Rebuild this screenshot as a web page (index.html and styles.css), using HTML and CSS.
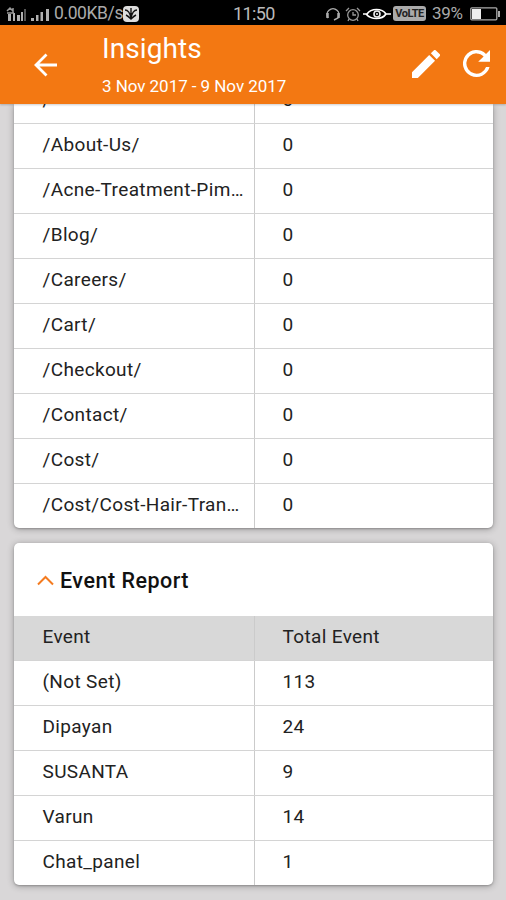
FILE: index.html
```html
<!DOCTYPE html>
<html lang="en">
<head>
<meta charset="utf-8">
<title>Insights</title>
<link rel="stylesheet" href="styles.css">
</head>
<body>
<div class="status">
  <div class="status-left">
    <svg width="44" height="18" viewBox="0 0 44 18"><g fill="#b0b0b0"><path d="M2 9h3v7H2zM7 8h2v8H7zM11 10h3v6h-3zM15 7h2v9h-2z"/><path d="M18 4h2v12h-2z" fill="#555"/><path d="M25 13h3v3h-3zM30 10h2.500v6H30zM34.500 7H37v9h-2.500zM40 4h3v12h-3z"/></g><path d="M1 6l3-3 3 3M7 3v5M1 8h7" stroke="#999" stroke-width="1.500" fill="none"/></svg>
    <span class="speed">0.00KB/s</span>
    <svg class="app" width="16" height="16" viewBox="0 0 16 16"><rect width="16" height="16" rx="4" fill="#ddd"/><path d="M2 4c3 0 5 3 6 8 1-5 3-8 6-8M8 2v10M3 9c2 1 3 2 5 4 2-2 3-3 5-4" stroke="#111" stroke-width="1.4" fill="none"/></svg>
  </div>
  <span class="clock">11:50</span>
  <div class="status-right">
    <svg width="16" height="16" viewBox="0 0 16 16" fill="none" stroke="#aaa"><path d="M3 12A6 6 0 1 1 13 12L9 14" stroke-width="1.4"/><path d="M2.500 7v5M13.500 7v5" stroke-width="2.500"/></svg>
    <svg class="alarm" width="16" height="16" viewBox="0 0 16 16" fill="none" stroke="#999" stroke-width="1.3"><circle cx="8" cy="9" r="5.3"/><path d="M8 6v3h3M1 5l3-3M15 5l-3-3M4 13l-1 2M12 13l1 2"/></svg>
    <svg class="eye" width="28" height="14" viewBox="0 0 28 14"><path d="M0 7h4C8 1 19 1 23 7h5M3 7c5 6 16 6 20 0" fill="none" stroke="#fff" stroke-width="1.7"/><circle cx="14" cy="7" r="3" fill="none" stroke="#eee" stroke-width="1.6"/><circle cx="14" cy="7" r="1" fill="#eee"/></svg>
    <span class="volte">VoLTE</span>
    <span class="percent">39%</span>
    <svg class="battery" width="31" height="14" viewBox="0 0 31 14"><rect x=".8" y=".8" width="26" height="12" rx="1" fill="none" stroke="#aaa" stroke-width="1.3"/><path d="M2 2h9v10H2z" fill="#eee"/><path d="M28 4h2v6h-2z" fill="#aaa"/></svg>
  </div>
</div>
<header class="bar">
  <svg class="back" width="24" height="24" viewBox="0 0 24 24"><path d="M23 12H2M12.5 1.5L2 12l10.500 10.500" fill="none" stroke="#fff" stroke-width="2.8"/></svg>
  <div class="titles"><h1>Insights</h1><p>3 Nov 2017 - 9 Nov 2017</p></div>
  <svg class="pencil" width="28" height="28" viewBox="3 3 18 18"><path fill="#fff" d="M3 17.250V21h3.750L17.810 9.940l-3.750-3.750L3 17.250zM20.710 7.040a1 1 0 0 0 0-1.410l-2.340-2.340a1 1 0 0 0-1.410 0l-1.830 1.830 3.750 3.750 1.830-1.830z"/></svg>
  <svg class="refresh" width="27" height="27" viewBox="4 4 16 16"><path fill="#fff" d="M17.650 6.350A8 8 0 1 0 19.730 14h-2.080A6 6 0 1 1 12 6c1.660 0 3.140.69 4.220 1.780L13 11h7V4l-2.350 2.350z"/></svg>
</header>
<main>
  <section class="card pages">
    <div class="row"><span>/</span><span>0</span></div>
    <div class="row"><span>/About-Us/</span><span>0</span></div>
    <div class="row"><span>/Acne-Treatment-Pim…</span><span>0</span></div>
    <div class="row"><span>/Blog/</span><span>0</span></div>
    <div class="row"><span>/Careers/</span><span>0</span></div>
    <div class="row"><span>/Cart/</span><span>0</span></div>
    <div class="row"><span>/Checkout/</span><span>0</span></div>
    <div class="row"><span>/Contact/</span><span>0</span></div>
    <div class="row"><span>/Cost/</span><span>0</span></div>
    <div class="row"><span>/Cost/Cost-Hair-Tran…</span><span>0</span></div>
  </section>
  <section class="card events">
    <h2><svg width="17" height="11" viewBox="0 0 17 11"><path d="M1 9.500L8.500 2 16 9.500" fill="none" stroke="#f47b20" stroke-width="2"/></svg>Event Report</h2>
    <div class="row head"><span>Event</span><span>Total Event</span></div>
    <div class="row"><span>(Not Set)</span><span>113</span></div>
    <div class="row"><span>Dipayan</span><span>24</span></div>
    <div class="row"><span>SUSANTA</span><span>9</span></div>
    <div class="row"><span>Varun</span><span>14</span></div>
    <div class="row"><span>Chat_panel</span><span>1</span></div>
  </section>
</main>
</body>
</html>
```
FILE: styles.css
```css
* { box-sizing: border-box; }
body { margin: 0; width: 506px; height: 900px; overflow: hidden; background: #d9d7d8; font-family: Roboto, sans-serif; color: #222; display: flex; flex-direction: column; }
svg { display: block; flex: none; }
.status { height: 25px; background: #000; color: #aaa; display: grid; grid-template-columns: 233px 92px 181px; align-items: center; font-size: 18px; line-height: 25px; flex: none; padding-top: 1px; }
.status-left, .status-right { display: flex; align-items: center; height: 24px; }
.status-left { padding-left: 6px; }
.speed { margin-left: 4px; width: 69px; font-size: 17.500px; letter-spacing: -.4px; white-space: nowrap; }
.clock { letter-spacing: -.6px; color: #bbb; }
.alarm { margin-left: 4px; }
.eye { margin-left: 2px; }
.volte { margin-left: 2px; width: 33px; height: 15px; border-radius: 3px; background: #aaa; color: #222; font-size: 11px; line-height: 15px; font-weight: 700; text-align: center; letter-spacing: -.5px; }
.percent { margin-left: 6px; width: 38px; font-size: 17px; letter-spacing: -.3px; }
.bar { height: 79px; flex: none; background: #f37812; color: #fff; display: flex; align-items: flex-start; position: relative; z-index: 1; box-shadow: 0 1px 2px rgba(0,0,0,.2); }
.back { margin: 28px 0 0 34px; }
.titles { margin: 7px 0 0 44px; width: 310px; }
h1 { margin: 0; font-size: 28px; line-height: 34px; font-weight: 400; letter-spacing: .1px; }
p { margin: 9px 0 0; font-size: 17px; line-height: 22px; letter-spacing: -.05px; }
.pencil { margin-top: 25px; }
.refresh { margin: 25px 0 0 23px; }
main { display: flex; flex-direction: column; gap: 15px; padding: 0 13px 0 14px; }
.card { background: #fff; border-radius: 5px; box-shadow: 0 1px 7px rgba(0,0,0,.3), 0 1px 2px rgba(0,0,0,.2); overflow: hidden; }
.pages { height: 424px; display: flex; flex-direction: column; justify-content: flex-end; border-radius: 0 0 5px 5px; }
.row { height: 45px; flex: none; display: grid; grid-template-columns: 241px 1fr; font-size: 19px; line-height: 42px; letter-spacing: .35px; border-bottom: 1.500px solid #d4d4d4; }
.row:last-child { border-bottom: 0; }
.pages .row:last-child { height: 44px; }
.row span { padding-left: 27.500px; white-space: nowrap; }
.row span:first-child { padding-left: 28.500px; border-right: 1px solid #cbcbcb; }
.events { height: 342px; }
h2 { margin: 0; height: 73px; padding: 2px 0 0 23px; display: flex; align-items: center; gap: 6px; font-size: 21.500px; line-height: 30px; font-weight: 500; letter-spacing: .5px; color: #111; }
.head { background: #d8d8d8; line-height: 41px; }
```
